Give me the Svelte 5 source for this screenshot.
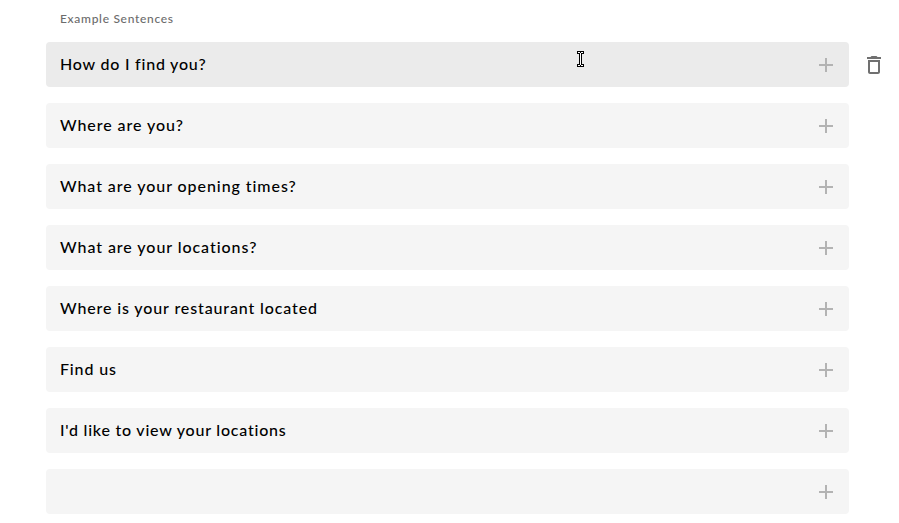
<script>
  const sentences = [
    { text: 'How do I find you?', spacing: 0.78 },
    { text: 'Where are you?', spacing: 0.93 },
    { text: 'What are your opening times?', spacing: 0.93 },
    { text: 'What are your locations?', spacing: 0.94 },
    { text: 'Where is your restaurant located', spacing: 0.87 },
    { text: 'Find us', spacing: 0.85 },
    { text: "I'd like to view your locations", spacing: 0.78 },
    { text: '', spacing: 0 }
  ];
</script>

<main>
  <div class="label"><span>Example Sentences</span></div>
  <div class="list">
    {#each sentences as sentence, i}
      <div class="row">
        <div class="field" class:active={i === 0}>
          <span class="text" style="letter-spacing: {sentence.spacing}px">{sentence.text}</span>
          <svg class="plus" width="14" height="14" viewBox="0 0 14 14" shape-rendering="crispEdges">
            <path d="M6 0h2v6h6v2H8v6H6V8H0V6h6z" />
          </svg>
        </div>
        {#if i === 0}
          <svg class="trash" width="24" height="24" viewBox="0 0 24 24">
            <path d="M6 19c0 1.1.9 2 2 2h8c1.1 0 2-.9 2-2V7H6v12zM8 9h8v10H8V9zm7.5-5l-1-1h-5l-1 1H5v2h14V4z" fill-rule="evenodd" />
          </svg>
        {/if}
      </div>
    {/each}
  </div>
  <svg class="cursor" width="10" height="18" viewBox="0 0 10 18" shape-rendering="crispEdges">
    <path d="M1 1h7v3H6v10h2v3H1v-3h2V4H1z" fill="#000" />
    <path d="M2 2h2v1h1V2h2v1H5v12h2v1H5v-1H4v1H2v-1h2V3H2z" fill="#fff" />
  </svg>
</main>

<style>
  :global(body) {
    margin: 0;
    background: #fff;
  }
  main {
    position: relative;
    box-sizing: border-box;
    width: 899px;
    height: 523px;
    padding-left: 46px;
    overflow: hidden;
    font-family: Lato, sans-serif;
  }
  .label {
    height: 42px;
    padding-left: 14px;
    box-sizing: border-box;
    font-size: 12px;
    font-weight: 500;
    line-height: 38px;
    letter-spacing: 0.69px;
    color: #6c6c6c;
  }
  .list {
    display: flex;
    flex-direction: column;
    gap: 16px;
  }
  .row {
    display: flex;
    align-items: center;
    height: 45px;
  }
  .field {
    display: flex;
    align-items: center;
    justify-content: space-between;
    box-sizing: border-box;
    width: 803px;
    height: 45px;
    padding: 0 16px 0 14px;
    border-radius: 4px;
    background: #f5f5f5;
  }
  .field.active {
    background: #ebebeb;
  }
  .text {
    margin-bottom: 2px;
    font-size: 16px;
    font-weight: 500;
    line-height: 24px;
    color: #000;
    white-space: pre;
  }
  .plus {
    margin-top: 1px;
    fill: #b3b3b3;
  }
  .trash {
    margin-left: 13px;
    fill: #707070;
  }
  .cursor {
    position: absolute;
    left: 576px;
    top: 50px;
  }
</style>
